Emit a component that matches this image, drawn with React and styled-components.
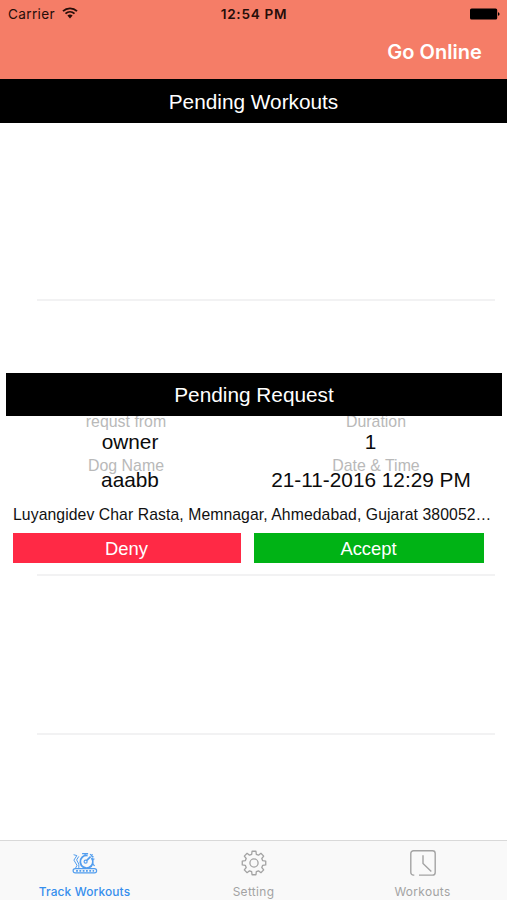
import React from 'react'
import styled, { createGlobalStyle } from 'styled-components'

const GlobalStyle = createGlobalStyle`
  body {
    margin: 0;
    background: #ffffff;
  }
`

const Screen = styled.div`
  width: 507px;
  height: 900px;
  display: flex;
  flex-direction: column;
  overflow: hidden;
  background: #ffffff;
  font-family: "Liberation Sans", Arial, sans-serif;
`

const Header = styled.header`
  height: 79px;
  flex: none;
  background: #f57d67;
  font-family: Inter, "Liberation Sans", sans-serif;
`

const StatusBar = styled.div`
  height: 27px;
  padding: 0 7px 0 8px;
  display: grid;
  grid-template-columns: 1fr auto 1fr;
  align-items: center;
  box-sizing: border-box;
  color: #260d09;
  font-size: 13.6px;

  svg {
    display: block;
  }
`

const Carrier = styled.div`
  display: flex;
  align-items: center;
  gap: 7px;
  letter-spacing: 0.35px;

  svg {
    margin-top: -2px;
  }
`

const Clock = styled.div`
  font-weight: 600;
  letter-spacing: 0.7px;
`

const Battery = styled.div`
  display: flex;
  justify-content: flex-end;
`

const NavBar = styled.div`
  height: 50px;
  padding-right: 25px;
  display: flex;
  align-items: center;
  justify-content: flex-end;
`

const NavButton = styled.button`
  padding: 0;
  border: 0;
  background: none;
  color: #ffffff;
  font-family: inherit;
  font-size: 20px;
  font-weight: 600;
  letter-spacing: 0.05px;
`

const SectionTitle = styled.h2`
  position: relative;
  z-index: 1;
  height: ${props => props.$height}px;
  margin: ${props => (props.$inset ? '0 5px 0 6px' : '0')};
  flex: none;
  background: #000000;
  color: #ffffff;
  font-size: 20.8px;
  font-weight: normal;
  line-height: ${props => props.$height + 1}px;
  text-align: center;
`

const EmptyRow = styled.div`
  height: ${props => props.$height}px;
  flex: none;
`

const Separator = styled.div`
  height: 2px;
  margin: 0 12px 0 37px;
  flex: none;
  background: #f2f2f3;
`

const RequestBody = styled.div`
  height: 158px;
  flex: none;
`

const Details = styled.div`
  display: grid;
  grid-template-columns: 254px 1fr;
  margin-top: -4px;
`

const Column = styled.div`
  text-align: center;
  white-space: nowrap;
`

const Label = styled.div`
  height: 20px;
  margin-top: ${props => props.$top || 0}px;
  padding-right: ${props => props.$right || 0}px;
  color: #b9b9b9;
  font-size: 15.9px;
  line-height: 20px;
`

const Value = styled.div`
  position: relative;
  height: 20px;
  margin-top: ${props => props.$top || 0}px;
  padding: ${props => props.$padding};
  color: #0b0b0b;
  font-size: 20.8px;
  line-height: 20px;
`

const Address = styled.div`
  margin: 15px 15px 0 13px;
  overflow: hidden;
  color: #111111;
  font-size: 15.75px;
  letter-spacing: 0.08px;
  line-height: 20px;
  white-space: nowrap;
`

const Actions = styled.div`
  display: grid;
  grid-template-columns: 228px 230px;
  gap: 13px;
  margin: 8px 0 0 13px;
`

const ActionButton = styled.button`
  height: 30px;
  padding: 1px 1px 0 0;
  border: 0;
  background: ${props => props.$color};
  color: #ffffff;
  font-family: inherit;
  font-size: 18.4px;
  line-height: 29px;
`

const TabBar = styled.nav`
  height: 60px;
  margin-top: auto;
  flex: none;
  display: grid;
  grid-template-columns: repeat(3, 1fr);
  border-top: 1px solid #d9d9d9;
  box-sizing: border-box;
  background: #f9f9f9;
`

const Tab = styled.div`
  padding-top: 9px;
  display: flex;
  flex-direction: column;
  align-items: center;
  color: ${props => (props.$active ? '#358eed' : '#a3a3a3')};
  font-family: Inter, "Liberation Sans", sans-serif;
  font-size: 11.9px;
  font-weight: ${props => (props.$active ? 500 : 400)};
  letter-spacing: ${props => (props.$active ? 0.15 : 0.35)}px;
  line-height: 16px;

  svg {
    display: block;
    margin-bottom: 8px;
  }
`

const WifiIcon = () => (
  <svg width="16" height="12" viewBox="0 0 16 12" fill="none" stroke="currentColor" strokeWidth="1.9">
    <path d="M1 4.1C5 .4 11 .4 15 4.1M3.5 6.6c2.6-2.3 6.4-2.3 9 0"/>
    <path d="M5.4 8.6c1.5-1.4 3.7-1.4 5.2 0L8 11.4z" fill="currentColor" stroke="none"/>
  </svg>
)

const BatteryIcon = () => (
  <svg width="30" height="12" viewBox="0 0 30 12" fill="#000000">
    <rect x="0" y="0.4" width="27.2" height="11.2" rx="1.6"/>
    <path d="M28 4.2c2 .4 2 3.2 0 3.6z"/>
  </svg>
)

const TrackIcon = () => (
  <svg width="28" height="26" viewBox="0 0 28 26" fill="none" stroke="currentColor">
    <g transform="translate(.6 .9)" opacity="0.85">
      <path d="M2 3.8l3.3.9M5.2 4.8L2.3 9.2l3.1 5.2-1.5 3M7.2 5.5L5 9l2.2 4.2v3.8" strokeWidth="1"/>
      <path d="M20 7a6.3 6.3 0 1 1-4-2.4" strokeWidth="1.8"/>
      <path d="M10.5 2.8h6M13.5 3v2M18.5 3.2l3.3 3.2M21 3.5l-1.7 2M20.8 8.5l2-.5M21 13l2 2" strokeWidth="1.3"/>
      <circle cx="14" cy="10.8" r="1.5" strokeWidth="1.2"/>
      <path d="M15.2 9.5L19 5.8" strokeWidth="1.8"/>
      <rect x="1.5" y="17.8" width="23.5" height="4.2" rx="2.1" strokeWidth="1.2"/>
      <path d="M4.5 19.9h18" strokeWidth="1.7" strokeDasharray="1.8 1.5"/>
    </g>
  </svg>
)

// eight teeth around the hub, four corner points per tooth
const gearPoints = Array.from({ length: 8 }).flatMap((_, i) => (
  [[-15, 9], [-9.5, 11.9], [9.5, 11.9], [15, 9]].map(([offset, r]) => {
    const a = (i * 45 + offset) * Math.PI / 180
    return `${(13 + r * Math.sin(a)).toFixed(2)},${(13 - r * Math.cos(a)).toFixed(2)}`
  })
)).join(' ')

const GearIcon = () => (
  <svg width="26" height="26" viewBox="0 0 26 26" fill="none" stroke="currentColor" strokeWidth="1.3" strokeLinejoin="round">
    <polygon points={gearPoints}/>
    <circle cx="13" cy="13" r="4.1"/>
  </svg>
)

const ClockIcon = () => (
  <svg width="26" height="26" viewBox="0 0 26 26" fill="none" stroke="currentColor" strokeWidth="1.4">
    <path d="M4.3 25.1H3.5A2.7 2.7 0 0 1 .8 22.4V3.5A2.7 2.7 0 0 1 3.5.8h19a2.7 2.7 0 0 1 2.7 2.7v18.9a2.7 2.7 0 0 1-2.7 2.7H9"/>
    <path d="M13 5.2v8.2l8.3 8"/>
  </svg>
)

const App = () => (
  <Screen>
    <GlobalStyle/>
    <Header>
      <StatusBar>
        <Carrier>Carrier <WifiIcon/></Carrier>
        <Clock>12:54 PM</Clock>
        <Battery><BatteryIcon/></Battery>
      </StatusBar>
      <NavBar>
        <NavButton>Go Online</NavButton>
      </NavBar>
    </Header>
    <SectionTitle $height={44}>Pending Workouts</SectionTitle>
    <EmptyRow $height={176}/>
    <Separator/>
    <EmptyRow $height={72}/>
    <SectionTitle $height={43} $inset>Pending Request</SectionTitle>
    <RequestBody>
      <Details>
        <Column>
          <Label $right={2}>requst from</Label>
          <Value $padding="0 0 0 6px">owner</Value>
          <Label $top={4} $right={2}>Dog Name</Label>
          <Value $top={-6} $padding="0 0 0 6px">aaabb</Value>
        </Column>
        <Column>
          <Label $right={9}>Duration</Label>
          <Value $padding="0 20px 0 0">1</Value>
          <Label $top={4} $right={9}>Date &amp; Time</Label>
          <Value $top={-6} $padding="0 19px 0 0">21-11-2016 12:29 PM</Value>
        </Column>
      </Details>
      <Address>Luyangidev Char Rasta, Memnagar, Ahmedabad, Gujarat 380052…</Address>
      <Actions>
        <ActionButton $color="#ff2945">Deny</ActionButton>
        <ActionButton $color="#00b315">Accept</ActionButton>
      </Actions>
    </RequestBody>
    <Separator/>
    <EmptyRow $height={157}/>
    <Separator/>
    <TabBar>
      <Tab $active><TrackIcon/>Track Workouts</Tab>
      <Tab><GearIcon/>Setting</Tab>
      <Tab><ClockIcon/>Workouts</Tab>
    </TabBar>
  </Screen>
)

export default App
